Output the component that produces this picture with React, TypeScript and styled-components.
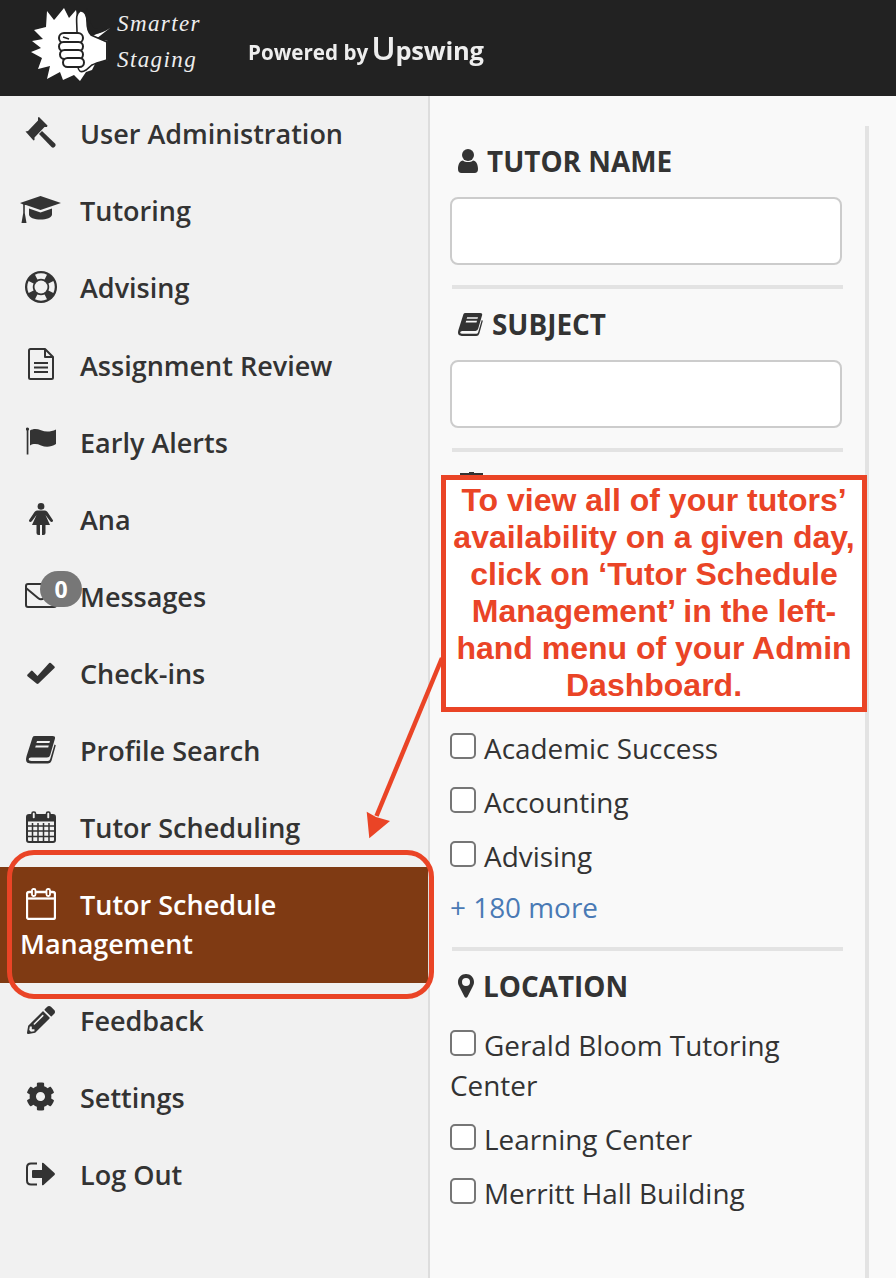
import React from "react";
import styled, { createGlobalStyle } from "styled-components";
import { FaCog, FaPencilAlt } from "react-icons/fa";

const Global = createGlobalStyle`
  html, body { margin: 0; padding: 0; background: #f9f9f9; }
  body { font-family: "Open Sans", "Liberation Sans", sans-serif; color: #333; font-size: 27px; line-height: 38.57px; overflow: hidden; }
  * { box-sizing: border-box; }
`;

const Page = styled.div`position: relative; width: 896px; height: 1278px; overflow: hidden; display: flex; flex-direction: column;`;
const Header = styled.header`height: 96px; flex: none; background: #222; display: flex; align-items: center; color: #fff;`;
const Logo = styled.div`display: flex; align-items: flex-start; width: 248px; padding: 8px 0 0 30px; height: 100%;`;
const LogoWords = styled.div`display: flex; flex-direction: column; gap: 13px; margin: 4px 0 0 7px; font-family: "Liberation Serif", serif; font-style: italic; font-size: 23px; line-height: 23px; letter-spacing: 1.4px; color: #eee;`;
const Powered = styled.div`display: flex; align-items: baseline; margin-top: 3px; font-weight: 700; font-size: 20.6px; line-height: 30px; color: #eee; filter: blur(0.35px); white-space: nowrap;`;
const Brand = styled.span`margin-left: 3px; font-size: 25.5px; font-weight: 700; letter-spacing: -0.2px;`;
const BrandU = styled.span`font-size: 33px; font-weight: 600;`;

const Body = styled.div`flex: 1; display: flex; min-height: 0;`;
const Sidebar = styled.nav`width: 430px; flex: none; background: #f1f1f1; border-right: 2px solid #ddd;`;
const NavItem = styled.a<{ $active?: boolean }>`
  display: block; position: relative; padding: 19.28px 0 19.28px 20px; font-weight: 600; font-size: 27px; line-height: 38.57px;
  color: ${(p) => (p.$active ? "#fff" : "#333")}; background: ${(p) => (p.$active ? "#7f3a13" : "transparent")};
`;
const IconSlot = styled.span`
  display: inline-flex; width: 41px; height: 20px; margin: 0 19px 8px 0; align-items: center; justify-content: center; vertical-align: middle;
  svg { flex: none; }
`;
const Badge = styled.span`position: absolute; left: 40px; top: 12px; width: 42px; height: 36px; border-radius: 18px; background: #777; color: #fff; font-size: 23px; line-height: 36px; font-weight: 700; text-align: center;`;

const Main = styled.main`flex: 1; padding-top: 30px; min-width: 0;`;
const Panel = styled.aside`width: 439px; height: 100%; border-right: 4px solid #e3e3e3; padding-left: 20px; padding-right: 23px;`;
const Heading = styled.h3`
  margin: 0; padding: 16px 0 0 8px; font-size: 27.9px; line-height: 38.57px; font-weight: 700; text-transform: uppercase; display: flex; align-items: center; gap: 9px;
  svg { flex: none; }
`;
const TextBox = styled.input`display: block; width: 392px; height: 68px; margin-top: 16.5px; border: 2px solid #ccc; border-radius: 8px; background: #fff; outline: none;`;
const Rule = styled.hr`height: 4px; margin: 20px 0 0 2px; border: 0; background: #e3e3e3; width: 391px;`;
const HiddenGroup = styled.section`
  height: 276px; padding: 20px 0 0 10px;
  svg { display: block; }
`;
const Gap = styled.div`height: 19px;`;
const Option = styled.label`display: block; line-height: 40px; margin-bottom: 14px; font-size: 27.9px;`;
const Tick = styled.input`appearance: none; display: inline-block; width: 26px; height: 26px; margin: 0 8px 0 0; border: 2px solid #767676; border-radius: 5px; background: #fff; vertical-align: 0;`;
const MoreLink = styled.a`display: block; margin-top: -3px; line-height: 40px; color: #4a7ab5; font-size: 27.9px;`;

const Callout = styled.div`position: absolute; left: 441px; top: 475px; width: 426px; height: 237px; padding-top: 2px; border: 5px solid #ea4426; background: #fff; color: #ea4426; font-family: "Liberation Sans", Arial, sans-serif; font-weight: 700; font-size: 32px; line-height: 37px; text-align: center;`;
const Ring = styled.div`position: absolute; left: 7px; top: 850px; width: 427px; height: 149px; border: 5px solid #ea4426; border-radius: 27px;`;
const ArrowArt = styled.svg`position: absolute; left: 360px; top: 650px;`;

const GavelIcon = () => (
  <svg width="32" height="32" viewBox="0 0 32 32" fill="currentColor">
    <path d="M0.5 14.5 L3 14 L13 3.5 L13 0.5 L14 0 L22.5 8.5 L22 10 L19.5 10 L9.5 20.5 L9.5 23 L8.5 23.5 Z" />
    <path d="M14 17 L17 14 L30 26.5 Q31.5 28 30 29.5 L29.5 30 Q28 31.5 26.5 30 Z" />
  </svg>
);
const CapIcon = () => (
  <svg width="41" height="28" viewBox="0 0 41 28" fill="currentColor">
    <path d="M20.5 0 L41 7 L20.5 14 L6 9 L4.8 9 V17 L6.5 27 H1.5 L3.2 17 V8.4 L0 7 Z" />
    <path d="M9 12.5 L20.5 16.5 L32 12.5 V18.5 C32 21.5 26.5 23.5 20.5 23.5 C14.5 23.5 9 21.5 9 18.5 Z" />
  </svg>
);
const LifeRingIcon = () => (
  <svg width="32" height="32" viewBox="0 0 32 32">
    <circle cx="16" cy="16" r="16" fill="#333" />
    <circle cx="16" cy="16" r="11" fill="none" stroke="#f1f1f1" strokeWidth="5.500" pathLength={360} strokeDasharray="52 38" strokeDashoffset="26" />
    <circle cx="16" cy="16" r="6.500" fill="#f1f1f1" />
  </svg>
);
const FileIcon = () => (
  <svg width="26" height="32" viewBox="0 0 26 32" fill="none" stroke="currentColor" strokeWidth="2" strokeLinejoin="round">
    <path d="M2.500 1 H17 L25 9 V29.500 Q25 31 23.500 31 H2.500 Q1 31 1 29.500 V2.500 Q1 1 2.500 1 Z" />
    <path d="M17 1 V9 H25" />
    <path d="M6 15 H20 M6 19.500 H20 M6 24 H20" />
  </svg>
);
const FlagIcon = () => (
  <svg width="30" height="28" viewBox="0 0 30 28" fill="currentColor">
    <circle cx="1.500" cy="2" r="1.600" /><rect x="0.700" y="2" width="1.700" height="25.500" />
    <path d="M4 3.500 C7 1.500 11 1.500 15 3.300 C20 5.400 25 4.800 30 2.500 V17 C25 20 20 20.400 15 18.400 C11 16.600 7 16.600 4 18.400 Z" />
  </svg>
);
const FemaleIcon = () => (
  <svg width="24" height="32" viewBox="0 0 24 32" fill="currentColor">
    <circle cx="12" cy="3.400" r="3.400" />
    <path d="M8 7.500 H16 Q17.500 7.500 18.500 9 L23.800 17 Q24.500 18.500 23 19 Q22 19.300 21 18 L16.500 12 L21 22 H16.500 V30 Q16.500 32 14.500 32 H13 V22 H11 V32 H9.500 Q7.500 32 7.500 30 V22 H3 L7.500 12 L3 18 Q2 19.300 1 19 Q-0.500 18.500 0.200 17 L5.500 9 Q6.500 7.500 8 7.500 Z" />
  </svg>
);
const EnvelopeIcon = () => (
  <svg width="32" height="25" viewBox="0 0 32 25" fill="none" stroke="currentColor" strokeWidth="2" strokeLinejoin="round">
    <rect x="1" y="1" width="30" height="23" rx="2" />
    <path d="M1 5 L13 15 Q16 17.500 19 15 L31 5" />
  </svg>
);
const CheckIcon = () => (
  <svg width="28" height="22" viewBox="0 0 28 22" fill="currentColor">
    <path d="M0.500 12.500 L4 9 Q4.800 8.200 5.600 9 L10.500 14 L22.200 1 Q23 0.300 23.800 1 L27.500 4.500 Q28.200 5.300 27.500 6 L11.500 21.500 Q10.500 22.400 9.500 21.500 L0.500 14.200 Q-0.200 13.300 0.500 12.500 Z" />
  </svg>
);
const BookIcon = ({ size = 30 }: { size?: number }) => (
  <svg width={size} height={size * 0.92} viewBox="0 0 30 27.600" fill="currentColor">
    <path fillRule="evenodd" d="M6.500 1.500 Q7 0 9 0 H26.500 Q29.500 0 29 2.500 L24.200 19 Q23.600 21.500 21 21.500 H5 Q2.600 21.500 2.600 23.300 Q2.600 25 5.400 25 H22 Q23.600 25 24.200 23 L28.500 8.500 L29.800 9.200 L25.600 24.500 Q24.600 27.500 22 27.500 H4.500 Q0 27.500 0 23.500 Q0 22 0.600 20 Z M11 5 L10.400 7 H23.400 L24 5 Z M9.800 9.400 L9.200 11.400 H22.200 L22.800 9.400 Z" />
  </svg>
);
const UserIcon = () => (
  <svg width="20" height="24" viewBox="0 0 20 24" fill="currentColor">
    <circle cx="10" cy="6" r="6" />
    <path d="M0 20 C0 15 2 12 5 11.500 C7 13.500 13 13.500 15 11.500 C18 12 20 15 20 20 Q20 24 16.500 24 H3.500 Q0 24 0 20 Z" />
  </svg>
);
const MarkerIcon = () => (
  <svg width="16" height="24" viewBox="0 0 16 24" fill="currentColor">
    <path fillRule="evenodd" d="M8 0 C3.500 0 0 3.500 0 8 C0 10 0.700 11.500 1.500 13 L6.500 22.800 Q8 24.800 9.500 22.800 L14.500 13 C15.300 11.500 16 10 16 8 C16 3.500 12.500 0 8 0 Z M8 4 a4 4 0 1 1 0 8 a4 4 0 1 1 0 -8 Z" />
  </svg>
);
const BriefcaseIcon = () => (
  <svg width="23" height="24" viewBox="0 0 23 24" fill="currentColor">
    <path d="M9 0 H14 V1 H23 V22 H0 V1 H9 Z" />
  </svg>
);
const CalendarFull = () => (
  <svg width="30" height="32" viewBox="0 0 30 32" fill="none" stroke="currentColor">
    <rect x="1" y="4" width="28" height="27" rx="2" strokeWidth="2" />
    <path d="M1 7.500 H29" strokeWidth="6" />
    <path d="M1 15 H29 M1 20 H29 M1 25.500 H29 M6.500 12 V31 M12 12 V31 M17.500 12 V31 M23 12 V31" strokeWidth="1.500" />
    <rect x="6" y="1" width="3.500" height="7" rx="1.500" fill="#f1f1f1" strokeWidth="1.600" />
    <rect x="20.500" y="1" width="3.500" height="7" rx="1.500" fill="#f1f1f1" strokeWidth="1.600" />
  </svg>
);
const CalendarOutline = () => (
  <svg width="30" height="32" viewBox="0 0 30 32" fill="none" stroke="currentColor">
    <rect x="1" y="4" width="28" height="27" rx="2" strokeWidth="2.300" />
    <path d="M1 10.500 H29" strokeWidth="2.300" />
    <rect x="6" y="1" width="3.500" height="7" rx="1.500" fill="#7f3a13" strokeWidth="1.800" />
    <rect x="20.500" y="1" width="3.500" height="7" rx="1.500" fill="#7f3a13" strokeWidth="1.800" />
  </svg>
);
const SignOutIcon = () => (
  <svg width="30" height="24" viewBox="0 0 30 24" fill="currentColor">
    <path d="M11 1.500 H5 Q1 1.500 1 5.500 V18.500 Q1 22.500 5 22.500 H11" fill="none" stroke="currentColor" strokeWidth="2" />
    <path d="M7 8 H16 V1 Q16.500 0.500 17.500 1 L28.500 11 Q29.500 12 28.500 13 L17.500 23 Q16.500 23.500 16 23 V16 H7 Q6 16 6 15 V9 Q6 8 7 8 Z" />
  </svg>
);
const LogoMark = () => (
  <svg width="80" height="76" viewBox="0 0 80 76" style={{ flex: "none" }}>
    <path fill="#fff" d="M17 3 L24 12 L25 11 L34 0 L39 10 L46 2 L50 26 L60 29 L80 20 L66 31 L78 33 L78 52 L66 54 L62 62 L56 64 L50 73 L44 67 L33 72 L30 64 L17 71 L20 58 L8 61 L12 50 L1 44 L11 40 L2 33 L13 31 L4 22 L16 19 Z" />
    <path fill="#222" d="M57 0 C60 6 59 14 63 19 C67 22 72 21 80 20 C73 25 66 27 60 25 C56 23 54 18 54 12 Z" />
    <path fill="#fff" stroke="#222" strokeWidth="1.600" d="M47 24 C47 14 45 6 50 3 C55 2 57 8 57 14 C57 20 58 24 61 27 L77 34 V52 C70 54 66 55 62 57 L56 62 C50 66 48 62 48 58 L46 30 Z" />
    <g fill="#fff" stroke="#222" strokeWidth="2">
      <rect x="29" y="25" width="24" height="10" rx="5" />
      <rect x="29" y="34" width="24" height="9" rx="4.500" />
      <rect x="30" y="42" width="23" height="9" rx="4.500" />
      <rect x="33" y="50" width="21" height="9" rx="4.500" />
    </g>
    <path d="M33 29 L39 31" stroke="#222" strokeWidth="1.500" />
    <path d="M77 33 V52" stroke="#222" strokeWidth="1.800" />
  </svg>
);

type Entry = { label: string; icon: React.ReactNode; active?: boolean; badge?: string };
const entries: Entry[] = [
  { label: "User Administration", icon: <GavelIcon /> },
  { label: "Tutoring", icon: <CapIcon /> },
  { label: "Advising", icon: <LifeRingIcon /> },
  { label: "Assignment Review", icon: <FileIcon /> },
  { label: "Early Alerts", icon: <FlagIcon /> },
  { label: "Ana", icon: <FemaleIcon /> },
  { label: "Messages", icon: <EnvelopeIcon />, badge: "0" },
  { label: "Check-ins", icon: <CheckIcon /> },
  { label: "Profile Search", icon: <BookIcon /> },
  { label: "Tutor Scheduling", icon: <CalendarFull /> },
  { label: "Tutor Schedule Management", icon: <CalendarOutline />, active: true },
  { label: "Feedback", icon: <FaPencilAlt size={28} /> },
  { label: "Settings", icon: <FaCog size={29} /> },
  { label: "Log Out", icon: <SignOutIcon /> },
];

export default function App() {
  return (
    <Page>
      <Global />
      <Header>
        <Logo>
          <LogoMark />
          <LogoWords><span>Smarter</span><span>Staging</span></LogoWords>
        </Logo>
        <Powered>Powered by<Brand><BrandU>U</BrandU>pswing</Brand></Powered>
      </Header>
      <Body>
        <Sidebar>
          {entries.map((e) => (
            <NavItem key={e.label} $active={e.active}>
              <IconSlot>{e.icon}</IconSlot>
              {e.label}
              {e.badge && <Badge>{e.badge}</Badge>}
            </NavItem>
          ))}
        </Sidebar>
        <Main>
          <Panel>
            <Heading><UserIcon />Tutor Name</Heading>
            <TextBox />
            <Rule />
            <Heading><BookIcon size={25} />Subject</Heading>
            <TextBox />
            <Rule />
            <HiddenGroup><BriefcaseIcon /></HiddenGroup>
            <Option><Tick type="checkbox" />Academic Success</Option>
            <Option><Tick type="checkbox" />Accounting</Option>
            <Option><Tick type="checkbox" />Advising</Option>
            <MoreLink>+ 180 more</MoreLink>
            <Rule />
            <Heading><MarkerIcon />Location</Heading>
            <Gap />
            <Option><Tick type="checkbox" />Gerald Bloom Tutoring Center</Option>
            <Option><Tick type="checkbox" />Learning Center</Option>
            <Option><Tick type="checkbox" />Merritt Hall Building</Option>
          </Panel>
        </Main>
      </Body>
      <Callout>
        To view all of your tutors’<br />
        availability on a given day,<br />
        click on ‘Tutor Schedule<br />
        Management’ in the left-<br />
        hand menu of your Admin<br />
        Dashboard.
      </Callout>
      <Ring />
      <ArrowArt width="90" height="200" viewBox="0 0 90 200">
        <path d="M82 8 L16.500 166" stroke="#ea4426" strokeWidth="4.500" fill="none" />
        <path d="M9.300 188.300 L6.700 161.700 L16 167 L30 171 Z" fill="#ea4426" />
      </ArrowArt>
    </Page>
  );
}
